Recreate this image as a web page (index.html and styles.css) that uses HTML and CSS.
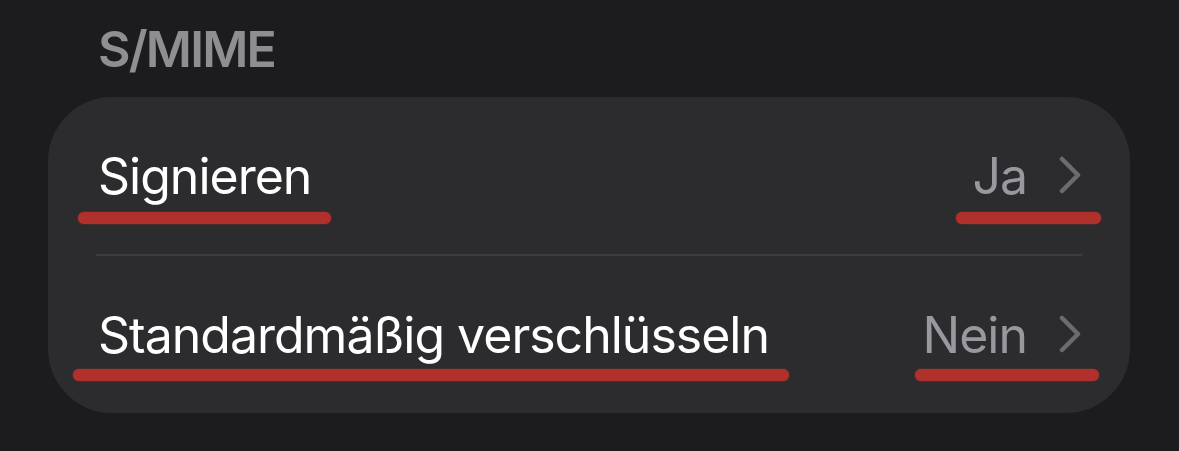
FILE: index.html
```html
<!DOCTYPE html>
<html lang="de">
<head>
<meta charset="utf-8">
<title>S/MIME</title>
<link rel="stylesheet" href="styles.css">
</head>
<body>
<main class="screen">
  <h2 class="section-header">S/MIME</h2>
  <section class="group">
    <div class="row">
      <span class="label mark mark-l1">Signieren</span>
      <span class="value mark mark-v1">Ja
        <svg class="chevron" width="24" height="38" viewBox="0 0 24 38"><polyline points="4,3 20,19 4,35" fill="none" stroke="#6b6b70" stroke-width="4.5" stroke-linecap="round" stroke-linejoin="round"/></svg>
      </span>
    </div>
    <div class="separator"></div>
    <div class="row">
      <span class="label mark mark-l2">Standardmäßig verschlüsseln</span>
      <span class="value mark mark-v2">Nein
        <svg class="chevron" width="24" height="38" viewBox="0 0 24 38"><polyline points="4,3 20,19 4,35" fill="none" stroke="#6b6b70" stroke-width="4.5" stroke-linecap="round" stroke-linejoin="round"/></svg>
      </span>
    </div>
  </section>
</main>
</body>
</html>
```

FILE: styles.css
```css
* { box-sizing: border-box; }
html, body {
  margin: 0;
  padding: 0;
  background: #1c1c1e;
}
body {
  font-family: Inter, "Noto Sans", sans-serif;
  width: 1179px;
  height: 451px;
  overflow: hidden;
}
.screen {
  padding: 0 49px 0 48px;
}
.section-header {
  margin: 0;
  height: 97px;
  padding: 19px 0 0 50px;
  font-size: 50px;
  line-height: 60px;
  font-weight: 600;
  color: #8e8e93;
  letter-spacing: -1.8px;
}
.group {
  background: #2c2c2e;
  border-radius: 64px;
  padding: 0 48px;
  height: 316px;
  display: flex;
  flex-direction: column;
}
.row {
  height: 157px;
  display: flex;
  align-items: center;
  justify-content: space-between;
  font-size: 50px;
  line-height: 60px;
  letter-spacing: -1px;
}
.label {
  color: #ffffff;
  padding-left: 2px;
}
.value {
  color: #98989f;
  display: flex;
  align-items: center;
  gap: 31px;
}
.chevron {
  display: block;
  margin-top: -2px;
}
.separator {
  height: 2px;
  background: #3d3d41;
}
.mark {
  position: relative;
}
.mark::after {
  content: "";
  position: absolute;
  top: 66px;
  height: 12px;
  border-radius: 6px;
  background: #b0302b;
  box-shadow: 0 0 1.5px #b0302b;
}
.mark-l2::after,
.mark-v2::after { top: 64px; }
.mark-l1::after { left: -18px; right: -20px; }
.mark-l2::after { left: -23px; right: -20px; }
.mark-v1::after { left: -16px; right: -19px; }
.mark-v2::after { left: -8px; right: -17px; }
```
